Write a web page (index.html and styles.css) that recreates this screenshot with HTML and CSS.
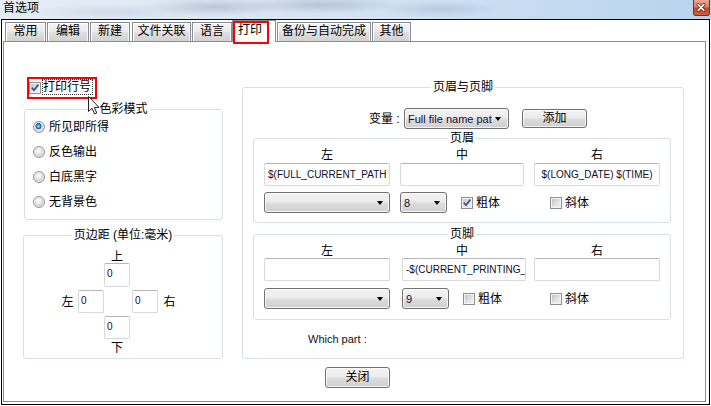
FILE: index.html
```html
<!DOCTYPE html>
<html lang="zh-CN">
<head>
<meta charset="utf-8">
<title>首选项</title>
<link rel="stylesheet" href="styles.css">
</head>
<body>
<div class="titlebar">
  <span class="title">首选项</span>
  <span class="closex"><svg width="17" height="16" viewBox="0 0 17 16"><path d="M5.5 4.5 L11.5 10.5 M11.5 4.5 L5.5 10.5" stroke="#5a1a10" stroke-width="3.4" stroke-linecap="round"/><path d="M5.5 4.5 L11.5 10.5 M11.5 4.5 L5.5 10.5" stroke="#fff" stroke-width="1.8" stroke-linecap="round"/></svg></span>
</div>
<div class="client">
  <div class="tabs">
    <div class="tab t1">常用</div>
    <div class="tab t2">编辑</div>
    <div class="tab t3">新建</div>
    <div class="tab t4">文件关联</div>
    <div class="tab t5">语言</div>
    <div class="tab sel">打印<span class="mark"></span></div>
    <div class="tab t7">备份与自动完成</div>
    <div class="tab t8">其他</div>
  </div>
  <div class="panel">
    <div class="cols">
      <div class="leftcol">
        <div class="chkline">
          <span class="cb checked"><svg width="10" height="10" viewBox="0 0 10 10"><path d="M1.8 4.6 L4 7.2 L8.4 1.6" fill="none" stroke="#3c4f86" stroke-width="1.7"/></svg></span>
          <span class="focus">打印行号</span>
        </div>
        <div class="group g-color">
          <div class="legend">色彩模式</div>
          <div class="radios">
            <div class="radio"><span class="rb on"></span>所见即所得</div>
            <div class="radio"><span class="rb"></span>反色输出</div>
            <div class="radio"><span class="rb"></span>白底黑字</div>
            <div class="radio"><span class="rb"></span>无背景色</div>
          </div>
        </div>
        <div class="group g-margin">
          <div class="legend">页边距 (单位:毫米)</div>
          <div class="cross">
            <div class="lbl c-top">上</div>
            <div class="tb num r-top">0</div>
            <div class="lbl c-left">左</div>
            <div class="tb num r-left">0</div>
            <div class="tb num r-right">0</div>
            <div class="lbl c-right">右</div>
            <div class="tb num r-bottom">0</div>
            <div class="lbl c-bottom">下</div>
          </div>
        </div>
      </div>
      <div class="rightcol">
        <div class="group g-hf">
          <div class="legend">页眉与页脚</div>
          <div class="varrow">
            <span class="varlbl">变量 :</span>
            <div class="combo combo-var"><span class="ctext">Full file name pat</span><span class="arrow"></span></div>
            <div class="btn btn-add">添加</div>
          </div>
          <div class="group sub g-head">
            <div class="legend">页眉</div>
            <div class="grid3 labels">
              <div>左</div><div>中</div><div>右</div>
            </div>
            <div class="grid3 inputs">
              <div class="tb txt left">$(FULL_CURRENT_PATH</div>
              <div class="tb txt"></div>
              <div class="tb txt">$(LONG_DATE) $(TIME)</div>
            </div>
            <div class="grid3 row2">
              <div class="combo combo-font"><span class="ctext"></span><span class="arrow"></span></div>
              <div class="cell">
                <div class="combo combo-size"><span class="ctext">8</span><span class="arrow"></span></div>
                <span class="cb checked small-gap"><svg width="10" height="10" viewBox="0 0 10 10"><path d="M1.8 4.6 L4 7.2 L8.4 1.6" fill="none" stroke="#3c4f86" stroke-width="1.7"/></svg></span><span class="cbl">粗体</span>
              </div>
              <div class="cell">
                <span class="cb italic-cb"></span><span class="cbl">斜体</span>
              </div>
            </div>
          </div>
          <div class="group sub g-foot">
            <div class="legend">页脚</div>
            <div class="grid3 labels">
              <div>左</div><div>中</div><div>右</div>
            </div>
            <div class="grid3 inputs">
              <div class="tb txt"></div>
              <div class="tb txt left shift">-$(CURRENT_PRINTING_</div>
              <div class="tb txt"></div>
            </div>
            <div class="grid3 row2">
              <div class="combo combo-font"><span class="ctext"></span><span class="arrow"></span></div>
              <div class="cell shift">
                <div class="combo combo-size"><span class="ctext">9</span><span class="arrow"></span></div>
                <span class="cb small-gap"></span><span class="cbl">粗体</span>
              </div>
              <div class="cell">
                <span class="cb italic-cb"></span><span class="cbl">斜体</span>
              </div>
            </div>
          </div>
          <div class="which">Which part :</div>
        </div>
      </div>
    </div>
    <div class="btnrow"><div class="btn btn-close">关闭</div></div>
  </div>
</div>
<svg class="cursor" width="13" height="20" viewBox="0 0 13 20"><path d="M0.5 0.5 L0.5 15.5 L4 12.2 L6.6 18 L8.8 17 L6.3 11.4 L11 11.4 Z" fill="#fff" stroke="#222" stroke-width="1" stroke-linejoin="round"/></svg>
</body>
</html>
```
FILE: styles.css
```css
* { box-sizing: border-box; margin: 0; padding: 0; }
html, body { width: 711px; height: 406px; overflow: hidden; background: #fff; }
body {
  position: relative;
  font: 12px/14px "Liberation Sans", "Noto Sans CJK SC", sans-serif;
  color: #000;
}

/* title bar */
.titlebar {
  height: 19px;
  display: flex;
  justify-content: space-between;
  align-items: flex-start;
  background:
    radial-gradient(ellipse 70px 9px at 215px 7px, rgba(110,125,150,0.30), transparent),
    radial-gradient(ellipse 80px 9px at 320px 5px, rgba(100,118,145,0.28), transparent),
    radial-gradient(ellipse 60px 8px at 440px 9px, rgba(100,125,170,0.22), transparent),
    radial-gradient(ellipse 90px 8px at 110px 12px, rgba(150,165,185,0.22), transparent),
    linear-gradient(90deg, #e6edf6 0%, #dce7f3 30%, #d0e0f1 60%, #c0d8f0 85%, #b8d3ef 100%);
}
.title { padding-left: 3px; line-height: 17px; font-size: 12px; color: #000; }
.closex {
  width: 17px;
  height: 16px;
  margin-right: 1px;
  border: 1px solid #7a3020;
  border-top: none;
  border-radius: 0 0 3px 3px;
  background: linear-gradient(#e9a797 0%, #de7d66 45%, #c9462a 55%, #d35b3e 100%);
  display: flex;
}
.closex svg { display: block; margin-left: -1px; }

/* client frame */
.client {
  margin-left: 1px;
  width: 709px;
  height: 386px;
  border: 1px solid #000;
}
.tabs {
  display: flex;
  align-items: flex-end;
  height: 21px;
  padding-left: 3px;
  position: relative;
  z-index: 2;
}
.tab {
  height: 19px;
  border: 1px solid #898c95;
  border-bottom: none;
  background: linear-gradient(#f4f4f4, #ececec 45%, #dedede 55%, #d2d2d2);
  box-shadow: inset 1px 1px 0 #fff, inset -1px 0 0 #f6f6f6;
  line-height: 17px;
  text-align: center;
  font-size: 12px;
  white-space: nowrap;
}
.t1 { width: 41px; }
.t2 { width: 42px; margin-left: 1px; }
.t3 { width: 40px; margin-left: 1px; }
.t4 { width: 59px; margin-left: 2px; }
.t5 { width: 40px; margin-left: 1px; }
.sel {
  width: 44px;
  height: 22px;
  margin-bottom: -1px;
  background: #fff;
  box-shadow: none;
  position: relative;
  line-height: 19px;
  text-align: left;
  padding-left: 5px;
}
.t7 { width: 94px; margin-left: 1px; }
.t8 { width: 39px; margin-left: 1px; }
.mark {
  position: absolute;
  left: 0;
  top: 0;
  width: 36px;
  height: 23px;
  border: 2px solid #f00;
}

.panel {
  margin-left: 1px;
  width: 703px;
  height: 361px;
  border: 1px solid #898c95;
  display: flex;
  flex-direction: column;
}
.cols { display: flex; align-items: flex-start; }
.leftcol {
  margin-left: 19px;
  width: 200px;
  display: flex;
  flex-direction: column;
  align-items: flex-start;
}
.rightcol { margin-left: 19px; margin-top: 45px; }

/* checkbox line with annotation */
.chkline {
  margin-top: 35px;
  margin-left: 4px;
  width: 70px;
  height: 22px;
  border: 2px solid #f00;
  display: flex;
  align-items: center;
}
.focus {
  margin-left: 1px;
  align-self: flex-start;
  height: 16px;
  border: 1px dotted #333;
  line-height: 14px;
  width: 51px;
}

.cb {
  width: 12px;
  height: 12px;
  flex: none;
  border: 1px solid #8f8f8f;
  background: linear-gradient(135deg, #b9bdc3, #e4e5e7 60%, #f4f4f4);
  box-shadow: inset 0 0 0 1px #f4f4f4;
  display: flex;
  align-items: center;
  justify-content: center;
}
.cb svg { display: block; }

/* groups */
.group {
  border: 1px solid #d5dfe5;
  border-radius: 3px;
}
.legend {
  display: table;
  margin: -8px auto 0;
  padding: 0 2px;
  background: #fff;
  line-height: 14px;
  height: 14px;
  white-space: nowrap;
}
.g-color { margin-top: 10px; margin-left: 1px; width: 199px; height: 111px; }
.g-margin { margin-top: 15px; width: 200px; height: 124px; }

.radios { margin-top: -2px; }
.radio {
  height: 25px;
  display: flex;
  align-items: center;
  padding-left: 8px;
}
.rb {
  width: 12px;
  height: 12px;
  border-radius: 50%;
  margin-right: 4px;
  border: 1px solid #949494;
  background: radial-gradient(circle at 45% 40%, #ffffff 0, #f0f0f0 25%, #cfcfcf 60%, #e8e8e8 100%);
  box-shadow: inset 0 0 0 1px rgba(255,255,255,0.6);
}
.rb.on {
  background:
    radial-gradient(circle at 45% 42%, #b8ecff 0, #3aa6e4 18%, #12508e 36%, transparent 40%),
    radial-gradient(circle at 45% 40%, #ffffff 0, #f0f0f0 25%, #cfcfcf 60%, #e8e8e8 100%);
}

/* margins cross */
.cross {
  margin-top: 8px;
  margin-left: 37px;
  display: grid;
  grid-template-columns: 13px 4px 26px 26px 2px 26px 5px 13px;
  grid-template-rows: 10px 24px 23px 23px 14px;
  row-gap: 3px;
}
.lbl { text-align: center; line-height: 14px; white-space: nowrap; }
.c-top { grid-column: 4; grid-row: 1; }
.r-top { grid-column: 4; grid-row: 2; }
.c-left { grid-column: 1; grid-row: 3; align-self: center; }
.r-left { grid-column: 3; grid-row: 3; }
.r-right { grid-column: 6; grid-row: 3; }
.c-right { grid-column: 8; grid-row: 3; align-self: center; }
.r-bottom { grid-column: 4; grid-row: 4; }
.c-bottom { grid-column: 4; grid-row: 5; line-height: 12px; }

.tb {
  border: 1px solid #d6d9de;
  border-top-color: #b3b6bd;
  border-radius: 2px;
  background: #fff;
  font-size: 10px;
  color: #0e0e2c;
  white-space: nowrap;
  overflow: hidden;
}
.num { padding-left: 2px; line-height: 19px; }
.txt { height: 23px; line-height: 21px; text-align: center; }
.txt.left { text-align: left; padding-left: 3px; }

/* header/footer group */
.g-hf { width: 442px; height: 272px; }
.varrow {
  margin-top: 14px;
  height: 21px;
  display: flex;
  align-items: center;
  padding-left: 126px;
}
.varlbl { width: 35px; white-space: nowrap; line-height: 14px; }
.combo {
  height: 21px;
  border: 1px solid #707070;
  border-radius: 3px;
  background: linear-gradient(#f3f3f3, #ebebeb 48%, #dddddd 52%, #cfcfcf);
  box-shadow: inset 0 0 0 1px rgba(255,255,255,0.75);
  display: flex;
  align-items: center;
  justify-content: space-between;
  padding: 0 6px 0 3px;
  font-size: 11px;
  color: #10103a;
}
.ctext { white-space: nowrap; line-height: 14px; }
.arrow {
  width: 0;
  height: 0;
  border-left: 3.5px solid transparent;
  border-right: 3.5px solid transparent;
  border-top: 4px solid #000;
  flex: none;
}
.combo-var { width: 105px; padding-right: 7px; }
.btn {
  border: 1px solid #707070;
  border-radius: 3px;
  background: linear-gradient(#f3f3f3, #ebebeb 48%, #dddddd 52%, #cfcfcf);
  box-shadow: inset 0 0 0 1px rgba(255,255,255,0.75);
  text-align: center;
  white-space: nowrap;
}
.btn-add { margin-left: 13px; width: 65px; height: 19px; line-height: 17px; }

.sub { margin-left: 10px; width: 418px; }
.g-head { margin-top: 9px; height: 85px; }
.g-foot { margin-top: 11px; height: 86px; }
.grid3 {
  display: grid;
  grid-template-columns: 126px 124px 126px;
  column-gap: 10px;
  padding-left: 10px;
}
.labels { margin-top: 3px; text-align: center; line-height: 14px; }
.inputs { margin-top: 1px; }
.g-foot .inputs { margin-top: 0; }
.row2 { margin-top: 6px; height: 21px; }
.g-foot .row2 { margin-top: 7px; }
.combo-font { width: 126px; }
.cell { display: flex; align-items: center; }
.combo-size { width: 47px; }
.small-gap { margin-left: 14px; }
.italic-cb { margin-left: 16px; }
.cbl { margin-left: 3px; line-height: 14px; }
.shift { margin-left: 2px; }
.g-foot .txt.shift { margin-left: 2px; margin-right: -2px; }
.which {
  margin-top: 12px;
  margin-left: 65px;
  font-size: 11px;
  line-height: 14px;
  color: #111;
}

.btnrow { margin-top: 8px; margin-left: 321px; }
.btn-close { width: 65px; height: 21px; line-height: 19px; }

.cursor { position: absolute; left: 88px; top: 96px; }
```
